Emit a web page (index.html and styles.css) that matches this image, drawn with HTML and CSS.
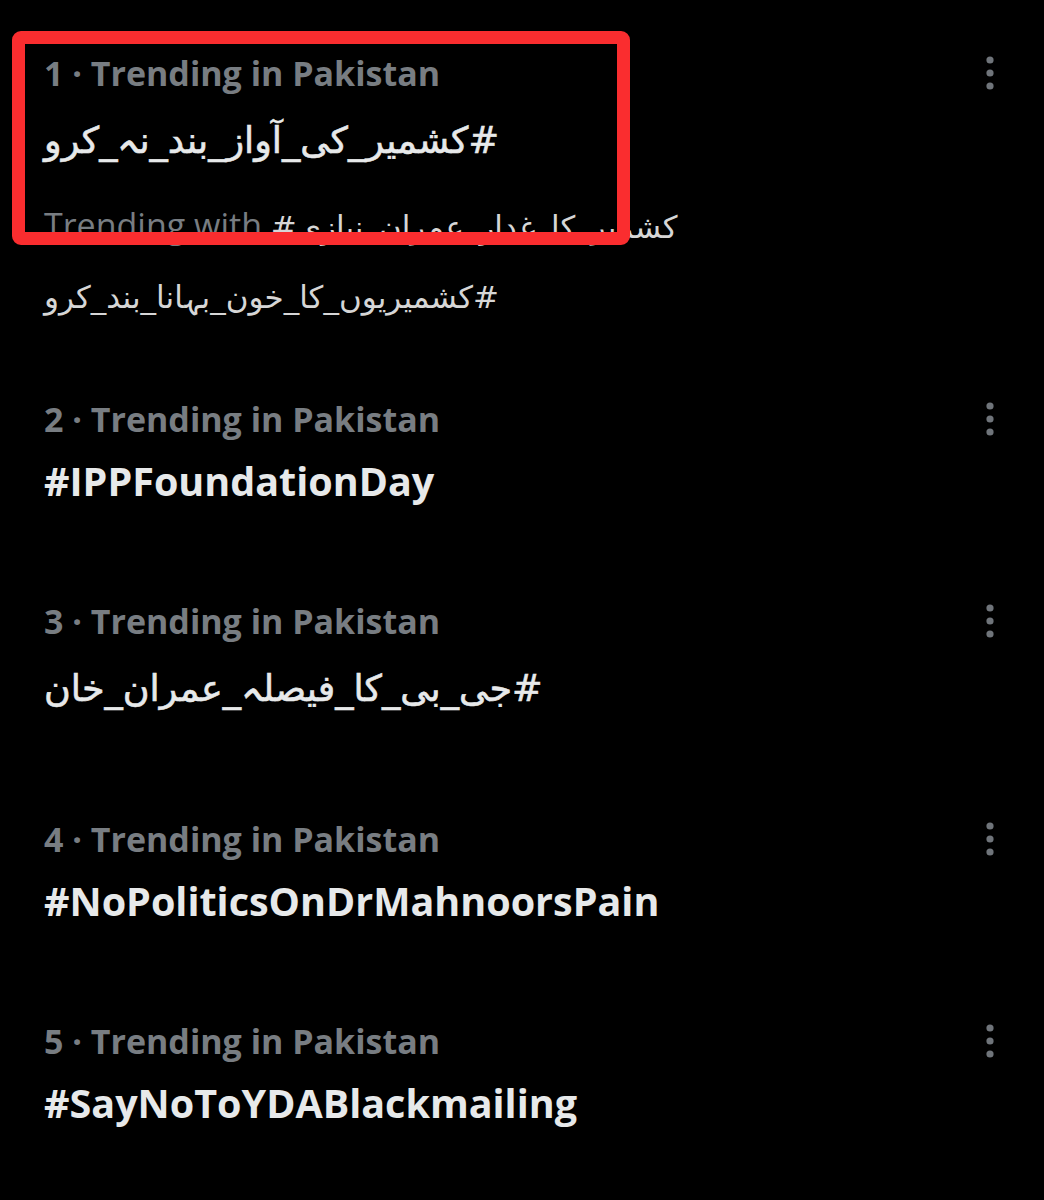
FILE: index.html
```html
<!doctype html>
<html>
  <head>
    <meta charset="utf-8">
    <title>Trends for you</title>
    <link rel="stylesheet" href="styles.css">
  </head>
  <body>
    <div class="trends">

      <div class="trend has-context">
        <div class="trend-head">
          <span class="trend-meta">1 · Trending in Pakistan</span>
          <span class="more"><svg width="10" height="34" viewBox="0 0 10 34"><circle cx="5" cy="4" r="3.6"/><circle cx="5" cy="17" r="3.6"/><circle cx="5" cy="30" r="3.6"/></svg></span>
        </div>
        <div class="trend-name urdu"><span dir="rtl">#کشمیر_کی_آواز_بند_نہ_کرو</span></div>
        <div class="trend-with">
          Trending with <a href="#" class="tag">#کشمیر_کا_غدار_عمران_نیازی</a><br>
          <a href="#" class="tag" dir="rtl">#کشمیریوں_کا_خون_بہانا_بند_کرو</a>
        </div>
      </div>

      <div class="trend">
        <div class="trend-head">
          <span class="trend-meta">2 · Trending in Pakistan</span>
          <span class="more"><svg width="10" height="34" viewBox="0 0 10 34"><circle cx="5" cy="4" r="3.6"/><circle cx="5" cy="17" r="3.6"/><circle cx="5" cy="30" r="3.6"/></svg></span>
        </div>
        <div class="trend-name">#IPPFoundationDay</div>
      </div>

      <div class="trend">
        <div class="trend-head">
          <span class="trend-meta">3 · Trending in Pakistan</span>
          <span class="more"><svg width="10" height="34" viewBox="0 0 10 34"><circle cx="5" cy="4" r="3.6"/><circle cx="5" cy="17" r="3.6"/><circle cx="5" cy="30" r="3.6"/></svg></span>
        </div>
        <div class="trend-name urdu"><span dir="rtl">#جی_بی_کا_فیصلہ_عمران_خان</span></div>
      </div>

      <div class="trend">
        <div class="trend-head">
          <span class="trend-meta">4 · Trending in Pakistan</span>
          <span class="more"><svg width="10" height="34" viewBox="0 0 10 34"><circle cx="5" cy="4" r="3.6"/><circle cx="5" cy="17" r="3.6"/><circle cx="5" cy="30" r="3.6"/></svg></span>
        </div>
        <div class="trend-name">#NoPoliticsOnDrMahnoorsPain</div>
      </div>

      <div class="trend">
        <div class="trend-head">
          <span class="trend-meta">5 · Trending in Pakistan</span>
          <span class="more"><svg width="10" height="34" viewBox="0 0 10 34"><circle cx="5" cy="4" r="3.6"/><circle cx="5" cy="17" r="3.6"/><circle cx="5" cy="30" r="3.6"/></svg></span>
        </div>
        <div class="trend-name">#SayNoToYDABlackmailing</div>
      </div>

      <div class="highlight"></div>
    </div>
  </body>
</html>
```

FILE: styles.css
```css
html, body
{margin:0;
padding:0;
background:#000;}

body
{font-family:"Open Sans","DejaVu Sans",sans-serif;
color:#e7e9ea;
min-height:1200px;}

.trends
{position:relative;
padding:5px 0 0 0;}

.trend{padding:46px 49px 46px 44px;}
.trend.has-context{padding-bottom:20px;}

.trend-head
{display:flex;
justify-content:space-between;
align-items:center;}

.trend-meta
{font-size:34px;
font-weight:700;
line-height:44px;
color:#787d82;}

.more{display:flex;}
.more svg{fill:#6f747a;}

.trend-name
{margin-top:14px;
font-size:39.5px;
font-weight:700;
line-height:52px;}

.trend-name.urdu
{margin-top:10px;
font-family:"DejaVu Sans",sans-serif;
font-size:36.5px;
font-weight:400;
line-height:72px;
-webkit-text-stroke:0.6px currentColor;}
.trend-name.urdu span{display:inline-block;}

.trend-with
{margin-top:14px;
font-size:34px;
line-height:68px;
color:#787d82;}

.trend-with .tag
{font-family:"DejaVu Sans",sans-serif;
font-size:31px;
color:#d6d6d6;
text-decoration:none;}
.trend-with .tag[dir=rtl]{display:inline-block;}

.highlight
{position:absolute;
left:12px;
top:31px;
width:618px;
height:214px;
box-sizing:border-box;
border:13px solid #fa2d2f;
border-radius:9px;}
```
